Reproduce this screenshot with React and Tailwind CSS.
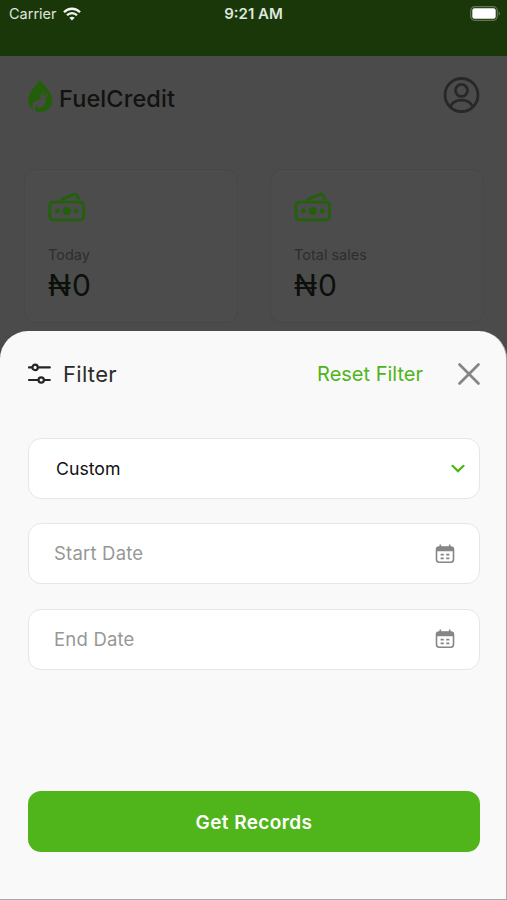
import { X } from 'lucide-react'

function WifiIcon() {
  return (
    <svg width="18" height="14" viewBox="0 0 18 14" fill="none" stroke="#f4f7f2" strokeWidth="2.3">
      <path d="M1 5.2C5.4 .6 12.6 .6 17 5.2" />
      <path d="M4 8.3C6.8 5.4 11.2 5.4 14 8.3" />
      <path d="M6.4 10.8C7.8 9.3 10.2 9.3 11.6 10.8L9 13.5Z" fill="#f4f7f2" stroke="none" />
    </svg>
  )
}

function BatteryIcon() {
  return (
    <svg width="31" height="15" viewBox="0 0 31 15" fill="none">
      <rect x=".7" y=".7" width="26.6" height="13.6" rx="4" stroke="#627658" strokeWidth="1.2" />
      <rect x="2.3" y="2.3" width="23.4" height="10.4" rx="2.2" fill="#fff" />
      <path d="M28.6 5.2C30.4 6 30.4 9 28.6 9.8Z" fill="#627658" />
    </svg>
  )
}

function DropLogo() {
  return (
    <svg width="26" height="34" viewBox="0 0 26 34">
      <path
        d="M12 .3C14.5 5.8 24.4 12.7 24.4 21.2C24.4 28 19 33 12.4 33C5.6 33 .2 28 .2 21.2C.2 12.7 9.7 5.8 12 .3Z"
        fill="#235f0a"
      />
      <path
        d="M16 13.6L12.2 17L12.6 20.2L6.6 22.6C4 24.6 3.8 28.8 5.2 30.8L7.6 32.2C6.6 29.4 7.2 26.8 9.3 25.6C9.4 28.6 11 29.6 13 28.5C17 27 18.8 23 17 19.4L20 16.2L18.8 15L16.3 17.3L14.8 16.6L17 14.5Z"
        fill="#4b4b4b"
      />
    </svg>
  )
}

function UserIcon() {
  return (
    <svg width="38" height="38" viewBox="0 0 38 38" fill="none" stroke="#282828" strokeWidth="2.8">
      <circle cx="18.5" cy="19" r="16.5" />
      <circle cx="18.5" cy="14.4" r="6" />
      <path d="M7.3 31C9.1 26.4 13.1 24.2 18.5 24.2S27.9 26.4 29.7 31" />
    </svg>
  )
}

function CashIcon() {
  return (
    <svg width="38" height="30" viewBox="0 0 38 30" fill="none" stroke="#22600a" strokeWidth="2.8">
      <rect x="1.8" y="10.2" width="33.8" height="17.6" rx="3.2" />
      <path d="M13 7.6L25.5 2.6C27.3 1.9 28.8 2.4 29.6 4.2L31 7.4" />
      <circle cx="18.7" cy="19" r="4" fill="#22600a" stroke="none" />
      <circle cx="9.3" cy="19" r="2.4" fill="#22600a" stroke="none" />
      <circle cx="28.1" cy="19" r="2.4" fill="#22600a" stroke="none" />
    </svg>
  )
}

function SlidersIcon() {
  return (
    <svg width="24" height="22" viewBox="0 0 24 22" fill="none" stroke="#242624" strokeWidth="2.2" strokeLinecap="round">
      <path d="M1 4.4H4.2M10 4.4H21.8M1 17H10.2M16.2 17H21.8" />
      <circle cx="7.1" cy="4.4" r="2.7" />
      <circle cx="13.2" cy="17" r="2.7" />
    </svg>
  )
}

function CalendarIcon() {
  return (
    <svg width="20" height="20" viewBox="0 0 20 20" fill="none">
      <rect x="1.5" y="3.1" width="17" height="15.1" rx="2.6" stroke="#858785" strokeWidth="1.6" />
      <path d="M1 7.2V5.4C1 3.8 2 2.7 3.6 2.7H16.4C18 2.7 19 3.8 19 5.4V7.2Z" fill="#858785" />
      <path d="M5.3 .6V3.5M14.7 .6V3.5" stroke="#858785" strokeWidth="1.6" />
      <path d="M5.6 10.7H8.8M11.2 10.7H14.4M5.6 14.3H8.8M11.2 14.3H14.4" stroke="#858785" strokeWidth="1.7" />
    </svg>
  )
}

function StatCard({ label, value }) {
  return (
    <div className="h-[154px] w-[214px] rounded-[12px] border border-[#474747] bg-[#4c4c4c] pt-[22px] pl-[23px]">
      <CashIcon />
      <p className="mt-[24px] text-[14.5px] leading-[18px] text-[#2e2e2e]">{label}</p>
      <p className="mt-[4px] text-[30px] leading-[34px] tracking-[1px] text-[#0c100b]">{value}</p>
    </div>
  )
}

function DateField({ label }) {
  return (
    <div className="flex h-[61px] items-center justify-between rounded-[13px] border border-[#e6e6e6] bg-white pr-[24px] pl-[25px]">
      <span className="pt-px text-[18.5px] tracking-[0.2px] text-[#969896]">{label}</span>
      <CalendarIcon />
    </div>
  )
}

export default function App() {
  return (
    <div className="flex h-[900px] w-[507px] flex-col overflow-hidden bg-[#4b4b4b] font-['Inter',sans-serif]">
      <div className="grid h-[56px] grid-cols-3 items-start bg-[#1a370a] pt-[5px] text-[15px] leading-[18px] text-[#dfe6dc]">
        <div className="flex items-center gap-[6px] pl-[9px]">
          <span className="text-[14.5px]">Carrier</span>
          <WifiIcon />
        </div>
        <span className="text-center font-semibold">9:21 AM</span>
        <div className="flex justify-end pt-px pr-[6px]">
          <BatteryIcon />
        </div>
      </div>

      <div className="h-[275px]">
        <div className="flex h-[58px] items-start justify-between pt-[20px] pr-[26px] pl-[28px]">
          <div className="flex items-start gap-[5px] pt-[3px]">
            <DropLogo />
            <span className="pt-[2px] text-[23.5px] leading-[36px] font-medium tracking-[0.1px] text-[#111311]">
              FuelCredit
            </span>
          </div>
          <UserIcon />
        </div>
        <div className="mt-[55px] flex justify-between pr-[23px] pl-[24px]">
          <StatCard label="Today" value="₦0" />
          <StatCard label="Total sales" value="₦0" />
        </div>
      </div>

      <div className="flex flex-1 flex-col rounded-t-[28px] border-r border-b border-[#a9a9a9] bg-[#f9f9f9] px-[28px] pr-[26px]">
        <div className="flex h-[86px] items-center">
          <SlidersIcon />
          <span className="ml-[11px] text-[22px] tracking-[0.3px] text-[#2b2d2b]">Filter</span>
          <span className="ml-auto text-[20px] text-[#4fb51a]">Reset Filter</span>
          <X className="-mr-[8px] ml-[27px] text-[#858585]" size={38} strokeWidth={1.7} />
        </div>

        <div className="mt-[20.5px] flex flex-col gap-[24.5px]">
          <div className="flex h-[61px] items-center justify-between rounded-[13px] border border-[#e6e6e6] bg-white pr-[14px] pl-[27px]">
            <span className="pt-[2px] text-[17.7px] text-[#111]">Custom</span>
            <svg width="14" height="10" viewBox="0 0 14 10" fill="none" stroke="#4fb51a" strokeWidth="2.2" strokeLinecap="round">
              <path d="M1.5 2.8L7 8.1L12.5 2.8" />
            </svg>
          </div>
          <DateField label="Start Date" />
          <DateField label="End Date" />
        </div>

        <button className="mt-[121.5px] h-[61px] rounded-[13px] bg-[#50b51a] pt-[3px] text-[19px] font-semibold tracking-[0.4px] text-white">
          Get Records
        </button>
      </div>
    </div>
  )
}
